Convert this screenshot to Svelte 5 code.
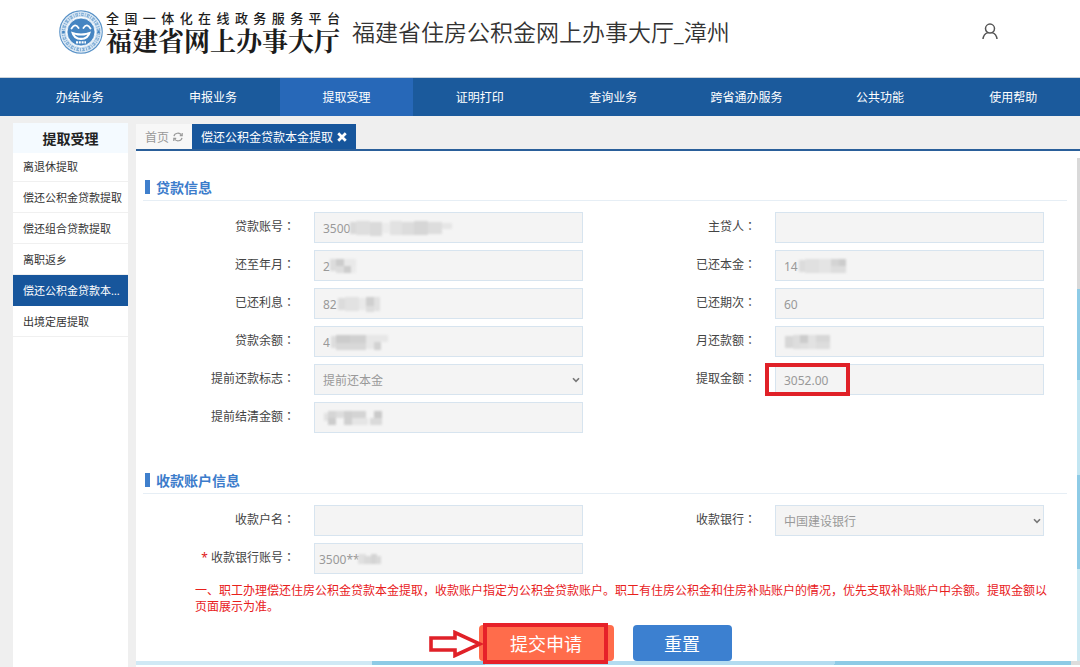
<script lang="ts">
    type Block = [x: number, y: number, w: number, h: number, color: string];

    type Field = {
        id: string;
        label: string;
        value?: string;
        select?: boolean;
        required?: boolean;
        marked?: boolean;
        mask?: Block[];
    };

    const navItems = ['办结业务', '申报业务', '提取受理', '证明打印', '查询业务', '跨省通办服务', '公共功能', '使用帮助'];
    const menuItems = ['离退休提取', '偿还公积金贷款提取', '偿还组合贷款提取', '离职返乡', '偿还公积金贷款本金提取', '出境定居提取'];

    let activeNav = $state(2);
    let activeMenu = $state(4);

    // Fields run left to right, two per row. null leaves the cell empty.
    const loanFields: (Field | null)[] = [
        {
            id: 'loan-account', label: '贷款账号', value: '3500',
            mask: [[36, 10, 6, 12, '#d9d9d9'], [42, 9, 14, 14, '#dedede'], [56, 10, 12, 14, '#dadada'], [68, 11, 8, 10, '#ececec'], [76, 9, 12, 14, '#e2e2e2'], [88, 10, 12, 13, '#dcdcdc'], [100, 9, 14, 14, '#d6d6d6'], [114, 10, 14, 12, '#dddddd'], [128, 11, 10, 6, '#e6e6e6']]
        },
        { id: 'borrower', label: '主贷人' },
        {
            id: 'paid-month', label: '还至年月', value: '2',
            mask: [[16, 9, 6, 12, '#dcdcdc'], [22, 9, 8, 7, '#cccccc'], [22, 16, 8, 7, '#dddddd'], [30, 16, 7, 7, '#cdcdcd'], [30, 9, 12, 7, '#e9e9e9'], [37, 16, 5, 7, '#ebebeb']]
        },
        {
            id: 'paid-principal', label: '已还本金', value: '14',
            mask: [[24, 10, 6, 12, '#dcdcdc'], [30, 9, 14, 14, '#e0e0e0'], [44, 9, 12, 14, '#e4e4e4'], [56, 9, 8, 8, '#d4d4d4'], [64, 9, 7, 7, '#cccccc'], [56, 16, 15, 7, '#dddddd']]
        },
        {
            id: 'paid-interest', label: '已还利息', value: '82',
            mask: [[24, 10, 7, 12, '#dcdcdc'], [31, 9, 14, 14, '#e2e2e2'], [45, 10, 7, 12, '#e9e9e9'], [52, 9, 8, 9, '#cfcfcf'], [60, 9, 6, 14, '#e1e1e1'], [52, 18, 8, 6, '#dddddd']]
        },
        { id: 'paid-terms', label: '已还期次', value: '60' },
        {
            id: 'loan-balance', label: '贷款余额', value: '4',
            mask: [[17, 10, 5, 12, '#dddddd'], [22, 9, 14, 8, '#cccccc'], [36, 9, 16, 8, '#d0d0d0'], [22, 17, 30, 7, '#d8d8d8'], [52, 9, 8, 14, '#e7e7e7'], [60, 9, 14, 7, '#e7e7e7'], [60, 16, 7, 8, '#d2d2d2']]
        },
        {
            id: 'monthly-payment', label: '月还款额',
            mask: [[10, 10, 8, 12, '#d7d7d7'], [18, 9, 7, 14, '#dddddd'], [25, 9, 8, 8, '#cccccc'], [33, 9, 8, 14, '#e2e2e2'], [41, 9, 14, 7, '#d7d7d7'], [25, 17, 8, 6, '#dfdfdf'], [41, 16, 14, 7, '#dddddd']]
        },
        { id: 'prepay-flag', label: '提前还款标志', value: '提前还本金', select: true },
        { id: 'withdraw-amount', label: '提取金额', value: '3052.00', marked: true },
        {
            id: 'settle-amount', label: '提前结清金额',
            mask: [[10, 11, 6, 8, '#e2e2e2'], [14, 9, 8, 7, '#d5d5d5'], [14, 16, 8, 7, '#cccccc'], [22, 9, 8, 7, '#dddddd'], [30, 9, 8, 14, '#d0d0d0'], [38, 9, 14, 7, '#d4d4d4'], [38, 16, 16, 7, '#e5e5e5'], [60, 9, 8, 7, '#cacaca'], [56, 16, 12, 7, '#dadada']]
        },
        null
    ];

    const payeeFields: (Field | null)[] = [
        { id: 'payee-name', label: '收款户名' },
        { id: 'payee-bank', label: '收款银行', value: '中国建设银行', select: true },
        {
            id: 'payee-account', label: '收款银行账号', value: '3500**', required: true,
            mask: [[44, 11, 8, 10, '#e0e0e0'], [50, 13, 12, 8, '#d9d9d9'], [57, 11, 6, 10, '#d4d4d4'], [62, 13, 5, 8, '#d9d9d9']]
        },
        null
    ];
</script>

{#snippet fieldGrid(fields: (Field | null)[])}
    <div class="field-grid">
        {#each fields as field}
            {#if field}
                <div class="field">
                    <label for={field.id}>
                        {#if field.required}<span class="required">*</span>{/if}
                        {field.label}<span class="colon">：</span>
                    </label>
                    <div class="control">
                        {#if field.select}
                            <select id={field.id} disabled>
                                <option>{field.value}</option>
                            </select>
                            <svg class="chevron" viewBox="0 0 8 6" aria-hidden="true">
                                <path d="M1 1.2 L4 4.4 L7 1.2" fill="none" stroke="#777" stroke-width="1.6" />
                            </svg>
                        {:else}
                            <input id={field.id} type="text" value={field.value ?? ''} disabled />
                        {/if}
                        {#if field.mask}
                            <svg class="mask" width="150" height="31" aria-hidden="true">
                                {#each field.mask as [x, y, w, h, color]}
                                    <rect {x} {y} width={w} height={h} fill={color} />
                                {/each}
                            </svg>
                        {/if}
                        {#if field.marked}
                            <span class="amount-mark"></span>
                        {/if}
                    </div>
                </div>
            {:else}
                <div></div>
            {/if}
        {/each}
    </div>
{/snippet}

<div class="page">
    <header>
        <div class="logo">
            <svg class="emblem" viewBox="0 0 44 44" aria-hidden="true">
                <circle cx="22" cy="22" r="21.2" fill="#fff" stroke="#5a93c8" stroke-width="1.2" />
                <circle cx="22" cy="22" r="17.6" fill="none" stroke="#d3e3f2" stroke-width="5.4" />
                <circle cx="22" cy="22" r="17.6" fill="none" stroke="#7fadd6" stroke-width="3.4" stroke-dasharray="2.6 1.2 1 1.1" />
                <circle cx="22" cy="22" r="17.6" fill="none" stroke="#e6f0f8" stroke-width="0.8" stroke-dasharray="1.8 1.4" />
                <circle cx="22" cy="22" r="14" fill="#4585c2" stroke="#fff" stroke-width="0.8" />
                <path d="M12.5 18.5 Q16 12.5 19.6 18" fill="none" stroke="#fff" stroke-width="1.8" stroke-linecap="round" />
                <path d="M24.4 18 Q28 12.5 31.5 18.5" fill="none" stroke="#fff" stroke-width="1.8" stroke-linecap="round" />
                <path d="M12 21.5 Q22 25.5 32 21.5 Q30 30 22 30 Q14 30 12 21.5 Z" fill="#fff" />
                <path d="M15.5 24.4 Q22 26.8 28.5 24.4 Q26.5 27.8 22 27.8 Q17.5 27.8 15.5 24.4 Z" fill="#4585c2" />
                <path d="M17 32.4 H27" stroke="#fff" stroke-width="2.2" stroke-dasharray="2 0.8" />
                <circle cx="4.4" cy="22" r="1.3" fill="#4585c2" />
                <circle cx="39.6" cy="22" r="1.3" fill="#4585c2" />
            </svg>
            <div class="wordmark">
                <div class="slogan">全国一体化在线政务服务平台</div>
                <div class="brand">福建省网上办事大厅</div>
            </div>
        </div>
        <h1>福建省住房公积金网上办事大厅_漳州</h1>
        <button class="user" type="button" aria-label="用户">
            <svg viewBox="0 0 16 17" aria-hidden="true">
                <circle cx="8" cy="5.6" r="4.5" />
                <path d="M1 16 C1.4 12.4 3.4 10.4 5.8 9.6 M10.2 9.6 C12.6 10.4 14.6 12.4 15 16" />
            </svg>
        </button>
    </header>

    <nav>
        {#each navItems as item, i}
            <a href="#nav-{i}" class:active={i === activeNav} onclick={() => (activeNav = i)}>{item}</a>
        {/each}
    </nav>

    <div class="body">
        <aside>
            <h2>提取受理</h2>
            <ul>
                {#each menuItems as item, i}
                    <li>
                        <a href="#menu-{i}" class:active={i === activeMenu} onclick={() => (activeMenu = i)}>{item}</a>
                    </li>
                {/each}
            </ul>
        </aside>

        <main>
            <div class="tabs">
                <button class="tab" type="button">
                    首页
                    <svg class="refresh" viewBox="0 0 10 10" aria-hidden="true">
                        <path d="M1 4.2 A4 3.6 0 0 1 8.4 3 M9 5.8 A4 3.6 0 0 1 1.6 7" />
                        <path d="M9.2 1 V3.6 H6.8 M0.8 9 V6.4 H3.2" />
                    </svg>
                </button>
                <button class="tab current" type="button">
                    偿还公积金贷款本金提取
                    <svg class="close" viewBox="0 0 8 8" aria-hidden="true">
                        <path d="M1 1 L7 7 M7 1 L1 7" />
                    </svg>
                </button>
            </div>

            <div class="view">
                <form class="panel" onsubmit={(e) => e.preventDefault()}>
                    <section>
                        <h3>贷款信息</h3>
                        {@render fieldGrid(loanFields)}
                    </section>
                    <section>
                        <h3>收款账户信息</h3>
                        {@render fieldGrid(payeeFields)}
                    </section>

                    <p class="notice">
                        一、职工办理偿还住房公积金贷款本金提取，收款账户指定为公积金贷款账户。职工有住房公积金和住房补贴账户的情况，优先支取补贴账户中余额。提取金额以页面展示为准。
                    </p>

                    <div class="actions">
                        <div class="submit-wrap">
                            <button class="submit" type="submit">提交申请</button>
                            <span class="submit-mark"></span>
                            <svg class="arrow" viewBox="0 0 54 28" aria-hidden="true">
                                <path d="M2 8 H26 V2.5 L51 14 L26 25.5 V20 H2 Z" />
                            </svg>
                        </div>
                        <button class="reset" type="reset">重置</button>
                    </div>
                </form>
                <div class="edge-right"></div>
                <div class="edge-bottom"></div>
            </div>
        </main>
    </div>
</div>

<style>
    :global(body) {
        margin: 0;
        background: #efefef;
    }

    .page {
        display: flex;
        flex-direction: column;
        min-height: 100vh;
        font-family: "Noto Sans", "Noto Sans CJK SC", sans-serif;
        font-size: 12px;
        color: #444;
    }

    .page *,
    .page {
        box-sizing: border-box;
    }

    button,
    input,
    select {
        font: inherit;
    }

    header {
        display: flex;
        align-items: center;
        height: 78px;
        padding: 0 82px 14px 59px;
        background: #fff;
        border-bottom: 1px solid #ccd3da;
    }

    .logo {
        display: flex;
        align-items: center;
        gap: 3px;
    }

    .emblem {
        width: 44px;
        height: 44px;
    }

    .wordmark {
        color: #1c1c1c;
        white-space: nowrap;
    }

    .slogan {
        width: 0;
        min-width: 100%;
        font-size: 13px;
        font-weight: 500;
        line-height: 16px;
        text-align-last: justify;
    }

    .brand {
        font-family: "Noto Serif CJK SC", "Noto Sans CJK SC", serif;
        font-size: 26px;
        font-weight: 700;
        line-height: 28px;
    }

    h1 {
        margin: 0 0 0 12px;
        font-size: 23px;
        font-weight: 350;
        line-height: 32px;
        color: #333;
    }

    .user {
        width: 16px;
        height: 17px;
        margin-left: auto;
        padding: 0;
        border: 0;
        background: none;
    }

    .user svg {
        display: block;
        fill: none;
        stroke: #555;
        stroke-width: 1.5;
    }

    nav {
        display: flex;
        height: 38px;
        padding-left: 13px;
        background: #1b5a9c;
    }

    nav a {
        flex: 1;
        line-height: 39px;
        text-align: center;
        color: #fff;
        text-decoration: none;
    }

    nav a.active {
        background: #2768b8;
    }

    .body {
        display: flex;
        flex: 1;
        gap: 8px;
        padding: 7px 0 0 13px;
    }

    aside {
        flex: none;
        width: 115px;
        background: #fff;
    }

    h2 {
        margin: 0;
        background: #f4faff;
        font-size: 14px;
        line-height: 32px;
        height: 30px;
        text-align: center;
        color: #222;
    }

    ul {
        margin: -2px 0 0;
        padding: 0;
        list-style: none;
    }

    li a {
        display: block;
        height: 31px;
        padding: 0 5px 0 10px;
        border-bottom: 1px solid #f0f0f0;
        overflow: hidden;
        font-size: 11px;
        line-height: 31px;
        white-space: nowrap;
        text-overflow: ellipsis;
        color: #333;
        text-decoration: none;
    }

    li a.active {
        background: #17569c;
        border-color: #17569c;
        color: #fff;
    }

    main {
        display: flex;
        flex: 1;
        flex-direction: column;
        min-width: 0;
    }

    .tabs {
        display: flex;
        padding-top: 1px;
        border-bottom: 2px solid #2a5f9a;
    }

    .tab {
        display: flex;
        align-items: center;
        gap: 4px;
        height: 25px;
        padding: 0 9px;
        border: 0;
        background: #f7f7f7;
        color: #999;
    }

    .tab.current {
        background: #17569c;
        color: #fff;
    }

    .tab svg {
        width: 10px;
        height: 10px;
        fill: none;
        stroke: currentColor;
        stroke-width: 1.2;
    }

    .tab svg.close {
        stroke-width: 2.2;
    }

    .view {
        display: grid;
        flex: 1;
        grid-template-columns: 1fr 3px;
        grid-template-rows: 1fr 4px;
        padding-bottom: 2px;
        background: #fff;
    }

    .panel {
        padding: 23px 10px 0 7px;
        background: #fff;
    }

    .edge-right {
        margin-top: 7px;
        background: linear-gradient(#d9d9d9 0 131px, #8ecbe6 131px 222px, #c3e6f2 222px 317px, #8ecbe6 317px 411px, #cdeaf3 411px);
    }

    .edge-bottom {
        grid-column: 1 / -1;
        background: linear-gradient(100deg, #d0e9f5 0 25%, #8ecbe6 25% 37%, #b3dcf0 37% 74%, #8ecbe6 74% 99%, #ddd 99%);
    }

    section {
        padding-bottom: 34px;
    }

    section + section {
        padding-bottom: 0;
    }

    h3 {
        display: flex;
        align-items: center;
        gap: 6px;
        margin: 0 0 11px;
        padding: 0 2px;
        height: 27px;
        border-bottom: 1px solid #e6eef5;
        font-size: 14px;
        color: #3c7ccb;
    }

    h3::before {
        content: "";
        width: 5px;
        height: 14px;
        background: #3f7fcc;
    }

    .field-grid {
        display: grid;
        grid-template-columns: 1fr 1fr;
        gap: 7px 0;
        padding-right: 2px;
    }

    .field {
        display: grid;
        grid-template-columns: 152fr 269fr;
        column-gap: 19px;
        padding-right: 21px;
    }

    label {
        line-height: 28px;
        text-align: right;
        white-space: nowrap;
    }

    .colon {
        font-family: "Noto Sans CJK TC", sans-serif;
    }

    .required {
        color: #e02020;
    }

    .control {
        position: relative;
    }

    input,
    select {
        display: block;
        width: 100%;
        height: 31px;
        padding: 1px 8px 0;
        border: 1px solid #d7e4ef;
        border-radius: 0;
        background: #f4f4f4;
        color: #999;
        opacity: 1;
        appearance: none;
    }

    #payee-account {
        padding-left: 4px;
    }

    .chevron {
        position: absolute;
        top: 13px;
        right: 3px;
        width: 8px;
        height: 6px;
    }

    .mask {
        position: absolute;
        top: 0;
        left: 0;
        filter: blur(1px);
        pointer-events: none;
    }

    .amount-mark {
        position: absolute;
        top: -1px;
        left: -10px;
        width: 85px;
        height: 33px;
        border: 4px solid #e02128;
        pointer-events: none;
    }

    .notice {
        margin: 9px 12px 0 52px;
        line-height: 16px;
        color: #e8201c;
    }

    .actions {
        display: flex;
        justify-content: center;
        gap: 19px;
        margin-top: 10px;
    }

    .submit-wrap {
        position: relative;
    }

    .actions button {
        display: block;
        width: 99px;
        height: 36px;
        padding: 0;
        border: 0;
        border-radius: 4px;
        background: #3c80d0;
        font-size: 18px;
        color: #fff;
    }

    .actions .submit {
        width: 135px;
        background: #ff6c4b;
    }

    .submit-mark {
        position: absolute;
        top: -2px;
        left: 4px;
        width: 125px;
        height: 41px;
        border: 4px solid #e62129;
        pointer-events: none;
    }

    .arrow {
        position: absolute;
        top: 5px;
        left: -50px;
        width: 54px;
        height: 28px;
        fill: #fff;
        stroke: #e02128;
        stroke-width: 3.6;
    }
</style>
